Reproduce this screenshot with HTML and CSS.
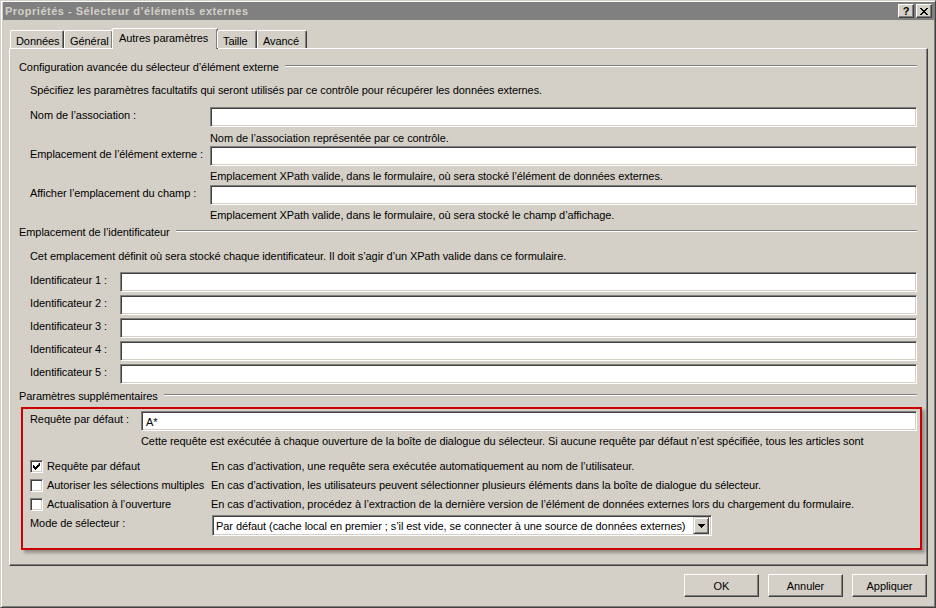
FILE: index.html
```
<!DOCTYPE html>
<html lang="fr">
<head>
<meta charset="utf-8">
<title>Propriétés - Sélecteur d'éléments externes</title>
<link rel="stylesheet" href="styles.css">
</head>
<body>
<div class="window">
  <div class="titlebar">
    <span class="title">Propriétés - Sélecteur d’éléments externes</span>
    <div class="tbtns">
      <span class="tbtn help">?</span>
      <span class="tbtn close"><svg width="8" height="7" viewBox="0 0 8 7"><path d="M0 0h2v1h1v1h2v-1h1v-1h2v1h-1v1h-1v1h-1v1h1v1h1v1h1v1h-2v-1h-1v-1h-2v1h-1v1h-2v-1h1v-1h1v-1h1v-1h-1v-1h-1v-1h-1z" fill="#000"/></svg></span>
    </div>
  </div>
  <div class="body">
    <div class="tabs">
      <span class="tab t1">Données</span>
      <span class="tab t2">Général</span>
      <span class="tab active">Autres paramètres</span>
      <span class="tab t4">Taille</span>
      <span class="tab t5">Avancé</span>
    </div>
    <div class="panel">
      <div class="heading"><span>Configuration avancée du sélecteur d’élément externe</span><i class="rule"></i></div>
      <div class="desc d1">Spécifiez les paramètres facultatifs qui seront utilisés par ce contrôle pour récupérer les données externes.</div>

      <div class="frow r-nom"><span class="lbl">Nom de l’association :</span><span class="field wide"></span></div>
      <div class="hint h1">Nom de l’association représentée par ce contrôle.</div>
      <div class="frow r-emp"><span class="lbl">Emplacement de l’élément externe :</span><span class="field wide"></span></div>
      <div class="hint h2">Emplacement XPath valide, dans le formulaire, où sera stocké l’élément de données externes.</div>
      <div class="frow r-aff"><span class="lbl">Afficher l’emplacement du champ :</span><span class="field wide"></span></div>
      <div class="hint h3">Emplacement XPath valide, dans le formulaire, où sera stocké le champ d’affichage.</div>

      <div class="heading hd2"><span>Emplacement de l’identificateur</span><i class="rule"></i></div>
      <div class="desc d2">Cet emplacement définit où sera stocké chaque identificateur. Il doit s’agir d’un XPath valide dans ce formulaire.</div>

      <div class="ids">
        <div class="irow"><span class="lbl">Identificateur 1 :</span><span class="field idf"></span></div>
        <div class="irow"><span class="lbl">Identificateur 2 :</span><span class="field idf"></span></div>
        <div class="irow"><span class="lbl">Identificateur 3 :</span><span class="field idf"></span></div>
        <div class="irow"><span class="lbl">Identificateur 4 :</span><span class="field idf"></span></div>
        <div class="irow"><span class="lbl">Identificateur 5 :</span><span class="field idf"></span></div>
      </div>

      <div class="heading hd3"><span>Paramètres supplémentaires</span><i class="rule"></i></div>

      <div class="redbox">
        <div class="qrow"><span class="lbl">Requête par défaut :</span><span class="field qf">A*</span></div>
        <div class="qhint">Cette requête est exécutée à chaque ouverture de la boîte de dialogue du sélecteur. Si aucune requête par défaut n’est spécifiée, tous les articles sont</div>
        <div class="checks">
          <div class="crow">
            <span class="cb"><svg width="7" height="7" viewBox="0 0 7 7"><path d="M6 0h1v3h-1v1h-1v1h-1v1h-1v1h-1v-1h-1v-1h-1v-3h1v1h1v1h1v-1h1v-1h1z" fill="#000"/></svg></span>
            <span class="clabel">Requête par défaut</span>
            <span class="cdesc">En cas d’activation, une requête sera exécutée automatiquement au nom de l’utilisateur.</span>
          </div>
          <div class="crow">
            <span class="cb"></span>
            <span class="clabel">Autoriser les sélections multiples</span>
            <span class="cdesc">En cas d’activation, les utilisateurs peuvent sélectionner plusieurs éléments dans la boîte de dialogue du sélecteur.</span>
          </div>
          <div class="crow">
            <span class="cb"></span>
            <span class="clabel">Actualisation à l’ouverture</span>
            <span class="cdesc">En cas d’activation, procédez à l’extraction de la dernière version de l’élément de données externes lors du chargement du formulaire.</span>
          </div>
        </div>
        <div class="mrow">
          <span class="lbl">Mode de sélecteur :</span>
          <span class="select"><span class="seltext">Par défaut (cache local en premier ; s’il est vide, se connecter à une source de données externes)</span><span class="selbtn"><svg width="7" height="4" viewBox="0 0 7 4"><path d="M0 0h7v1h-1v1h-1v1h-1v1h-1v-1h-1v-1h-1v-1h-1z" fill="#000"/></svg></span></span>
        </div>
      </div>
    </div>
    <div class="buttons">
      <span class="btn">OK</span>
      <span class="btn">Annuler</span>
      <span class="btn">Appliquer</span>
    </div>
  </div>
</div>
</body>
</html>
```
FILE: styles.css
```
* { box-sizing: border-box; }
html, body { margin: 0; padding: 0; background: #d4d0c8; }
body {
  font-family: "Liberation Sans", Arial, sans-serif;
  font-size: 11px;
  letter-spacing: -0.07px;
  color: #000;
}
.window {
  width: 936px;
  height: 608px;
  background: #d4d0c8;
  border: 1px solid;
  border-color: #d4d0c8 #404040 #404040 #d4d0c8;
  box-shadow: inset 1px 1px #fff, inset -1px -1px #808080;
  padding: 1px 1px 0 2px;
  display: flex;
  flex-direction: column;
}
.titlebar {
  height: 18px;
  background: #808080;
  display: flex;
  align-items: center;
  justify-content: space-between;
  padding: 0 2px 0 2px;
}
.title {
  color: #d4d0c8;
  font-weight: bold;
  font-size: 11px;
  letter-spacing: 0.5px;
}
.tbtns { display: flex; gap: 2px; }
.tbtn {
  width: 16px;
  height: 14px;
  background: #d4d0c8;
  border: 1px solid;
  border-color: #fff #404040 #404040 #fff;
  box-shadow: inset -1px -1px #808080;
  display: flex;
  align-items: center;
  justify-content: center;
  font-weight: bold;
  font-size: 11px;
  line-height: 1;
}
.body {
  flex: 1;
  display: flex;
  flex-direction: column;
  padding: 8px 0 0 6px;
}
.tabs {
  display: flex;
  align-items: flex-end;
  height: 20px;
  padding-left: 1px;
  position: relative;
  z-index: 2;
}
.tab {
  height: 18px;
  border-top: 1px solid #fff;
  border-left: 1px solid #fff;
  border-right: 1px solid #404040;
  box-shadow: inset -1px 0 #808080;
  border-radius: 2px 2px 0 0;
  padding: 3px 6px 0 5px;
  background: #d4d0c8;
  line-height: 14px;
  white-space: nowrap;
}
.t1 { width: 54px; }
.t2 { width: 49px; }
.t4 { width: 40px; }
.t5 { width: 50px; }
.tab.active {
  height: 21px;
  margin: 0 -1px -1px -1px;
  width: 106px;
  padding-top: 2px;
  padding-left: 6px;
}
.panel {
  width: 919px;
  height: 518px;
  border-top: 1px solid #fff;
  border-left: 1px solid #fff;
  border-right: 1px solid #404040;
  border-bottom: 1px solid #404040;
  box-shadow: inset -1px -1px #808080;
  padding: 10px 0 0 9px;
  display: flex;
  flex-direction: column;
}
.heading {
  height: 14px;
  line-height: 16px;
  display: flex;
  align-items: flex-start;
  white-space: nowrap;
}
.rule {
  flex: 1;
  height: 2px;
  border-top: 1px solid #808080;
  border-bottom: 1px solid #fff;
  margin: 6px 10px 0 6px;
}
.desc, .hint, .lbl, .qhint {
  line-height: 16px;
  height: 14px;
  white-space: nowrap;
}
.clabel, .cdesc {
  line-height: 14px;
  height: 14px;
  white-space: nowrap;
}
.desc { padding-left: 11px; }
.d1 { margin-top: 9px; }
.field {
  display: block;
  height: 20px;
  background: #fff;
  border: 1px solid;
  border-color: #808080 #fff #fff #808080;
  box-shadow: inset 1px 1px #404040, inset -1px -1px #d4d0c8;
}
.frow {
  display: flex;
  padding-left: 11px;
  height: 20px;
}
.frow .lbl { width: 180px; }
.field.wide { width: 707px; }
.r-nom { margin-top: 11px; }
.r-emp { margin-top: 2px; }
.r-aff { margin-top: 3px; }
.hint { padding-left: 191px; }
.h1 { margin-top: 3px; }
.h2 { margin-top: 2px; }
.h3 { margin-top: 2px; }
.hd2 { margin-top: 3px; }
.d2 { margin-top: 10px; }
.ids {
  margin-top: 10px;
  display: flex;
  flex-direction: column;
  gap: 3px;
  padding-left: 11px;
}
.irow { display: flex; height: 20px; }
.irow .lbl { width: 90px; height: 20px; }
.field.idf { width: 797px; }
.hd3 { margin-top: 4px; }
.redbox {
  margin-top: 5px;
  margin-left: 2px;
  width: 901px;
  height: 143px;
  border: 2px solid #cc0000;
  box-shadow: 3px 3px 3px rgba(0, 0, 0, 0.3);
  padding: 2px 0 0 7px;
  display: flex;
  flex-direction: column;
}
.qrow { display: flex; height: 20px; }
.qrow .lbl { width: 111px; }
.field.qf {
  width: 776px;
  padding: 3px 0 0 4px;
  line-height: 14px;
}
.qhint { padding-left: 111px; margin-top: 2px; }
.checks {
  margin-top: 12px;
  display: flex;
  flex-direction: column;
  gap: 5px;
}
.crow { display: flex; align-items: center; height: 14px; }
.cb {
  width: 13px;
  height: 13px;
  background: #fff;
  border: 1px solid;
  border-color: #808080 #fff #fff #808080;
  box-shadow: inset 1px 1px #404040, inset -1px -1px #d4d0c8;
  display: flex;
  align-items: center;
  justify-content: center;
  flex: none;
}
.clabel { width: 168px; padding-left: 4px; }
.mrow { display: flex; margin-top: 4px; height: 21px; }
.mrow .lbl { width: 182px; }
.select {
  width: 500px;
  height: 21px;
  background: #fff;
  border: 1px solid;
  border-color: #808080 #fff #fff #808080;
  box-shadow: inset 1px 1px #404040, inset -1px -1px #d4d0c8;
  display: flex;
  align-items: center;
  justify-content: space-between;
  padding: 0 2px 0 3px;
}
.seltext { line-height: 14px; white-space: nowrap; }
.selbtn {
  width: 16px;
  height: 17px;
  background: #d4d0c8;
  border: 1px solid;
  border-color: #d4d0c8 #404040 #404040 #d4d0c8;
  box-shadow: inset 1px 1px #fff, inset -1px -1px #808080;
  display: flex;
  align-items: center;
  justify-content: center;
}
.buttons {
  display: flex;
  justify-content: flex-end;
  gap: 9px;
  margin-top: 8px;
  padding-right: 3px;
  width: 921px;
}
.btn {
  width: 75px;
  height: 23px;
  border: 1px solid;
  border-color: #fff #404040 #404040 #fff;
  box-shadow: inset -1px -1px #808080;
  display: flex;
  align-items: center;
  justify-content: center;
}
```
